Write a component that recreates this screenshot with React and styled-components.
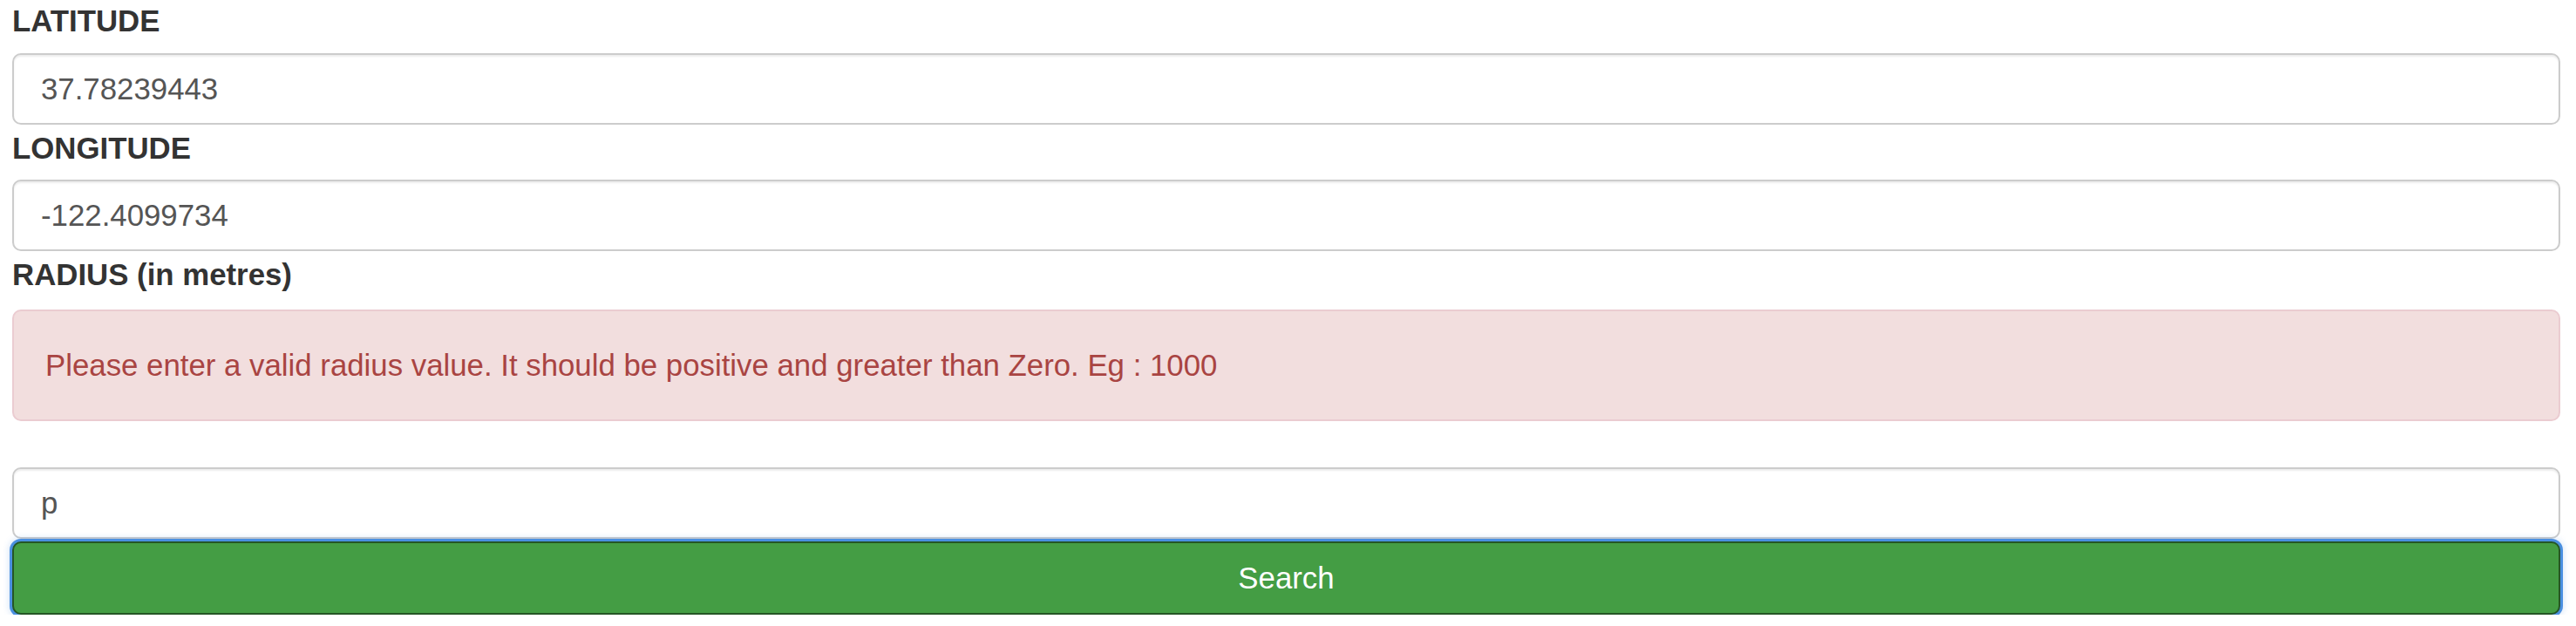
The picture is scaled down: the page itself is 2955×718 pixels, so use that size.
import React from 'react';
import styled, { createGlobalStyle } from 'styled-components';

const GlobalStyle = createGlobalStyle`
  body {
    margin: 0;
    background: #fff;
    font-family: 'Liberation Sans', Arial, sans-serif;
  }
`;

const Page = styled.form`
  display: flex;
  flex-direction: column;
  padding: 0 18px 0 14px;
  font-size: 34.8px;
  line-height: 48.6px;
  color: #333;
`;

const Label = styled.label`
  display: block;
  font-weight: 700;
  margin: ${props => (props.first ? '0' : '3px')} 0 12px;
`;

const Input = styled.input`
  box-sizing: border-box;
  display: block;
  width: 100%;
  height: 82px;
  padding: 0 31px;
  font-family: inherit;
  font-size: 34.8px;
  color: #555;
  background: #fff;
  border: 2px solid #ccc;
  border-radius: 10px;
  box-shadow: inset 0 2px 2px rgba(0, 0, 0, 0.075);
  outline: none;
`;

const Alert = styled.div`
  margin: 3px 0 53px;
  padding: 38px 36px;
  color: #a94442;
  background: #f2dede;
  border: 2px solid #ebccd1;
  border-radius: 10px;
`;

const Button = styled.button`
  box-sizing: border-box;
  width: 100%;
  height: 84px;
  margin-top: 3px;
  font-family: inherit;
  font-size: 34.8px;
  color: #fff;
  background: #449d44;
  border: 2px solid #255625;
  border-radius: 10px;
  box-shadow: 0 0 0 3px #4a8fe0, 0 0 7px 4px rgba(74, 143, 224, 0.22);
  cursor: pointer;
`;

export default function App() {
  return (
    <>
      <GlobalStyle />
      <Page onSubmit={e => e.preventDefault()}>
        <Label first>LATITUDE</Label>
        <Input defaultValue="37.78239443" />
        <Label>LONGITUDE</Label>
        <Input defaultValue="-122.4099734" />
        <Label>RADIUS (in metres)</Label>
        <Alert>
          Please enter a valid radius value. It should be positive and greater than Zero. Eg : 1000
        </Alert>
        <Input defaultValue="p" />
        <Button type="submit">Search</Button>
      </Page>
    </>
  );
}
